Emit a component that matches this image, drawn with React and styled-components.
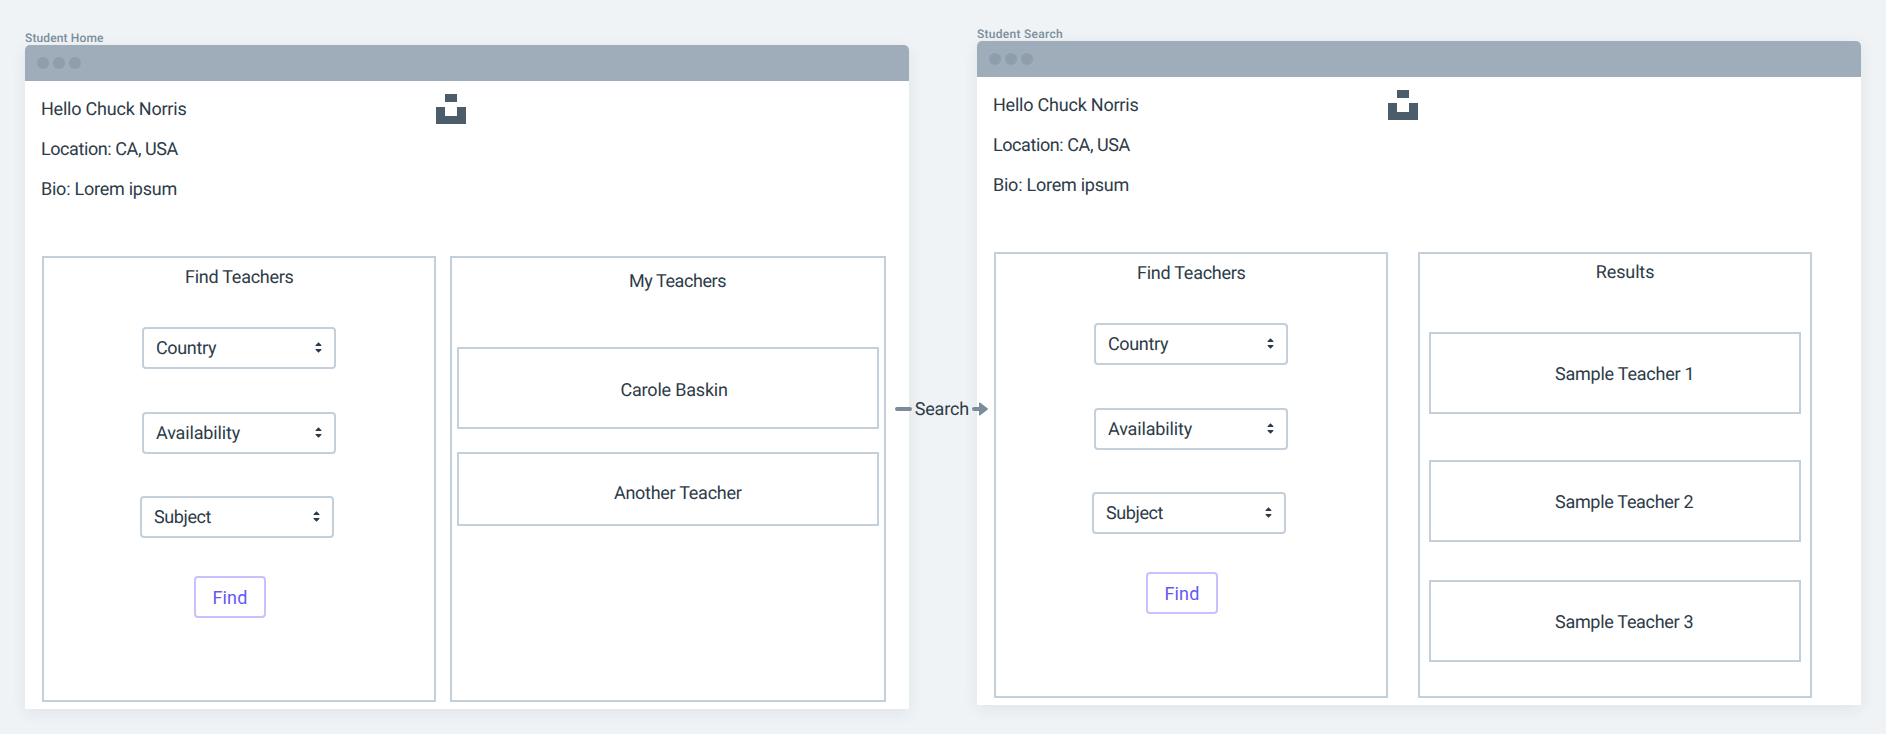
import React from "react";
import styled, { createGlobalStyle } from "styled-components";

const ink = "#2d3b48";
const outline = "#c3cfda";

const GlobalStyle = createGlobalStyle`
  * { box-sizing: border-box; }
  body {
    margin: 0;
    background: #eff3f6;
    color: ${ink};
    font-family: Roboto, "Liberation Sans", sans-serif;
    font-size: 18px;
    line-height: 22px;
    text-rendering: geometricPrecision;
  }
`;

const Canvas = styled.main`
  position: relative;
  display: flex;
  gap: 68px;
  width: 1886px;
  height: 734px;
  padding-left: 25px;
  overflow: hidden;
`;

const Artboard = styled.section`
  width: 884px;
  padding-top: ${(p) => p.$top}px;
`;

const Label = styled.div`
  height: 16px;
  font-size: 12px;
  font-weight: 500;
  line-height: 18px;
  letter-spacing: ${(p) => p.$spacing}px;
  color: #7b8d9b;
  white-space: nowrap;
`;

const Browser = styled.div`
  height: 664px;
  background: #fff;
  border-radius: 5px 5px 0 0;
  box-shadow: 0 4px 16px rgba(30, 40, 50, 0.07);
`;

const TitleBar = styled.header`
  display: flex;
  align-items: center;
  gap: 4px;
  height: 36px;
  padding: 0 12px;
  background: #9eadb9;
  border-radius: 5px 5px 0 0;
`;

const Dot = styled.span`
  width: 12px;
  height: 12px;
  border-radius: 50%;
  background: #8e9eac;
`;

const Profile = styled.div`
  display: flex;
  align-items: flex-start;
  height: 175px;
  padding: 9px 0 0 16px;
`;

const ProfileLines = styled.div`
  width: 395px;
`;

const ProfileLine = styled.div`
  height: 40px;
  line-height: 40px;
  letter-spacing: ${(p) => p.$spacing}px;
`;

const Logo = styled.svg`
  display: block;
  margin-top: 4px;
  fill: #4b5c6b;
`;

const Panels = styled.div`
  display: flex;
  gap: ${(p) => p.$gap}px;
  padding-left: 17px;
`;

const Panel = styled.div`
  display: flex;
  flex-direction: column;
  width: ${(p) => p.$width}px;
  height: 446px;
  border: 2px solid ${outline};
`;

const PanelTitle = styled.div`
  height: 22px;
  margin: ${(p) => p.$top}px 0 0 ${(p) => p.$left}px;
  letter-spacing: ${(p) => p.$spacing}px;
  white-space: nowrap;
`;

const Filters = styled.div`
  display: flex;
  flex-direction: column;
  align-items: flex-start;
  padding: 38px 0 0 98px;
`;

const SelectBox = styled.div`
  display: flex;
  align-items: center;
  justify-content: space-between;
  width: 194px;
  height: 42px;
  margin: 0 0 ${(p) => p.$after}px ${(p) => p.$left || 0}px;
  padding: 0 12px;
  border: 2px solid ${outline};
  border-radius: 4px;
  letter-spacing: ${(p) => p.$spacing}px;
`;

const SelectText = styled.span`
  padding-top: 2px;
`;

const Caret = styled.svg`
  display: block;
  margin-bottom: 1px;
  fill: ${ink};
`;

const FindButton = styled.button`
  width: 72px;
  height: 42px;
  margin-left: 52px;
  padding: 2px 0 0;
  border: 2px solid #c6c1ff;
  border-radius: 4px;
  background: #fff;
  color: #6558f5;
  font: inherit;
  letter-spacing: 0.15px;
`;

const Cards = styled.div`
  display: flex;
  flex-direction: column;
  padding: ${(p) => p.$top}px ${(p) => p.$side}px 0;
`;

const Card = styled.div`
  height: ${(p) => p.$height}px;
  margin-bottom: ${(p) => p.$after}px;
  padding: ${(p) => p.$textTop}px 0 0 ${(p) => p.$textLeft}px;
  border: 2px solid ${outline};
  letter-spacing: ${(p) => p.$spacing}px;
  white-space: nowrap;
`;

const Connector = styled.div`
  position: absolute;
  top: 398px;
  left: 895px;
  display: flex;
  align-items: center;
  height: 22px;
`;

const Dash = styled.span`
  width: 17px;
  height: 4px;
  border-radius: 2px;
  background: #7b8b9a;
`;

const ConnectorLabel = styled.span`
  width: 60px;
  padding: 2px 0 0 2.7px;
  letter-spacing: -0.15px;
`;

const ArrowHead = styled.svg`
  display: block;
  fill: #7b8b9a;
`;

function Window({ label, top, spacing, gap, children }) {
  return (
    <Artboard $top={top}>
      <Label $spacing={spacing}>{label}</Label>
      <Browser>
        <TitleBar>
          <Dot />
          <Dot />
          <Dot />
        </TitleBar>
        <Profile>
          <ProfileLines>
            <ProfileLine $spacing={-0.22}>Hello Chuck Norris</ProfileLine>
            <ProfileLine $spacing={-0.42}>Location: CA, USA</ProfileLine>
            <ProfileLine $spacing={-0.24}>Bio: Lorem ipsum</ProfileLine>
          </ProfileLines>
          <Logo width="30" height="30" viewBox="0 0 30 30" shapeRendering="crispEdges">
            <path d="M9 0h12v8H9zM0 13h9v9h12v-9h9v17H0z" />
          </Logo>
        </Profile>
        <Panels $gap={gap}>{children}</Panels>
      </Browser>
    </Artboard>
  );
}

function Select({ children, ...rest }) {
  return (
    <SelectBox {...rest}>
      <SelectText>{children}</SelectText>
      <Caret width="7" height="11" viewBox="0 0 7 11">
        <path d="M3.5 0.3L6.5 3.3Q6.7 4 6 4H1Q.3 4 .5 3.3zM3.5 10.7L6.5 7.7Q6.7 7 6 7H1Q.3 7 .5 7.7z" />
      </Caret>
    </SelectBox>
  );
}

function FindPanel() {
  return (
    <Panel $width={394}>
      <PanelTitle $top={9} $left={141} $spacing={-0.26}>Find Teachers</PanelTitle>
      <Filters>
        <Select $after={43} $spacing={-0.35}>Country</Select>
        <Select $after={42} $spacing={-0.15}>Availability</Select>
        <Select $after={38} $left={-2} $spacing={-0.4}>Subject</Select>
        <FindButton>Find</FindButton>
      </Filters>
    </Panel>
  );
}

export default function App() {
  return (
    <>
      <GlobalStyle />
      <Canvas>
        <Window label="Student Home" top={29} spacing={0.13} gap={14}>
          <FindPanel />
          <Panel $width={436}>
            <PanelTitle $top={13} $left={177} $spacing={-0.43}>My Teachers</PanelTitle>
            <Cards $top={54} $side={5}>
              <Card $height={82} $after={23} $textTop={31} $textLeft={161.5} $spacing={-0.2}>Carole Baskin</Card>
              <Card $height={74} $after={0} $textTop={29} $textLeft={155} $spacing={-0.28}>Another Teacher</Card>
            </Cards>
          </Panel>
        </Window>
        <Window label="Student Search" top={25} spacing={0.28} gap={30}>
          <FindPanel />
          <Panel $width={394}>
            <PanelTitle $top={8} $left={175.8} $spacing={-0.13}>Results</PanelTitle>
            <Cards $top={48} $side={9}>
              <Card $height={82} $after={46} $textTop={30} $textLeft={124} $spacing={-0.23}>Sample Teacher 1</Card>
              <Card $height={82} $after={38} $textTop={30} $textLeft={124} $spacing={-0.3}>Sample Teacher 2</Card>
              <Card $height={82} $after={0} $textTop={30} $textLeft={124} $spacing={-0.3}>Sample Teacher 3</Card>
            </Cards>
          </Panel>
        </Window>
        <Connector>
          <Dash />
          <ConnectorLabel>Search</ConnectorLabel>
          <ArrowHead width="16" height="14" viewBox="0 0 16 14">
            <path d="M2 5h5V1.2Q7 0 8 .6L15.5 6.3Q16.3 7 15.5 7.7L8 13.4Q7 14 7 12.8V9H2A2 2 0 0 1 2 5z" />
          </ArrowHead>
        </Connector>
      </Canvas>
    </>
  );
}
